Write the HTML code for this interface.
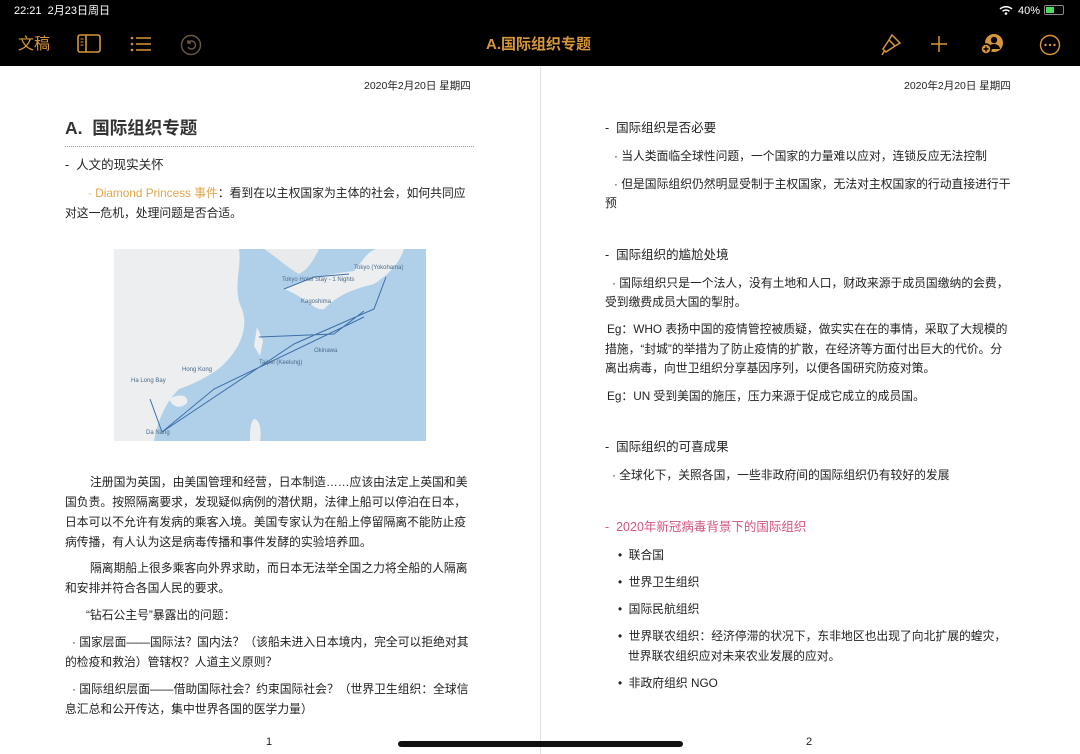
<!DOCTYPE html>
<html><head><meta charset="utf-8"><style>
*{margin:0;padding:0;box-sizing:border-box}
body{width:1080px;height:754px;overflow:hidden;background:#fff;font-family:"Liberation Sans","Noto Sans CJK SC",sans-serif;color:#222;position:relative}
.bar{position:absolute;left:0;top:0;width:1080px;height:66px;background:#000}
.t{position:absolute;white-space:nowrap;font-size:11.8px;line-height:16px}
.o{color:#d8963a}
.w{color:#fff}
.pk{color:#d4557f}
.gold{color:#e0a54a}
</style></head><body>
<div class="bar"></div>
<div class="t w" style="left:14px;top:3px;font-size:11px">22:21&nbsp;&nbsp;2月23日周日</div>
<div class="t w" style="left:1018px;top:3px;font-size:11px">40%</div>
<svg style="position:absolute;left:999px;top:5px" width="14" height="10" viewBox="0 0 14 10"><path d="M1 4a9 9 0 0 1 12 0M3.5 6.3a5.5 5.5 0 0 1 7 0" stroke="#fff" stroke-width="1.5" fill="none"/><circle cx="7" cy="8.5" r="1.3" fill="#fff"/></svg>
<div style="position:absolute;left:1044px;top:5px;width:20px;height:10px;border:1px solid #888;border-radius:2px"><div style="width:8px;height:6px;margin:1px;background:#4cd964"></div></div>
<div class="t o" style="left:18px;top:35px;font-size:16px;line-height:20px">文稿</div>
<svg style="position:absolute;left:77px;top:34px" width="24" height="20"><rect x="1" y="1" width="22" height="17" rx="2" fill="none" stroke="#d8963a" stroke-width="1.6"/><line x1="9" y1="1" x2="9" y2="18" stroke="#d8963a" stroke-width="1.6"/><path d="M3.5 5h3M3.5 8h3M3.5 11h3" stroke="#d8963a"/></svg>
<svg style="position:absolute;left:130px;top:36px" width="22" height="16"><g fill="#d8963a"><circle cx="2" cy="2" r="1.3"/><circle cx="2" cy="8" r="1.3"/><circle cx="2" cy="14" r="1.3"/></g><path d="M6 2h15M6 8h15M6 14h15" stroke="#d8963a" stroke-width="1.5"/></svg>
<svg style="position:absolute;left:180px;top:34px" width="22" height="22"><circle cx="11" cy="11" r="9.5" fill="none" stroke="#6a5a45" stroke-width="1.4"/><path d="M8 9a4 4 0 1 1 0 4M8 6v3h3" fill="none" stroke="#6a5a45" stroke-width="1.4"/></svg>
<div class="t o" style="left:486px;top:35px;font-size:15px;line-height:20px;font-weight:bold">A.国际组织专题</div>
<svg style="position:absolute;left:878px;top:32px" width="26" height="26"><path d="M14 3l8 8-5 3-6-6zM11 8l-6 9 3 3 9-6M7 18l-3 5" fill="none" stroke="#d8963a" stroke-width="1.5"/></svg>
<svg style="position:absolute;left:929px;top:34px" width="20" height="20"><path d="M10 2v16M2 10h16" stroke="#d8963a" stroke-width="1.5"/></svg>
<svg style="position:absolute;left:979px;top:32px" width="28" height="24"><circle cx="15" cy="11" r="9" fill="#d8963a"/><circle cx="15" cy="8" r="3.2" fill="#000"/><path d="M9 17a6 5 0 0 1 12 0" fill="#000"/><circle cx="7" cy="17" r="5" fill="#d8963a" stroke="#000" stroke-width="1.5"/><path d="M7 14.5v5M4.5 17h5" stroke="#000" stroke-width="1.4"/></svg>
<svg style="position:absolute;left:1039px;top:34px" width="22" height="22"><circle cx="11" cy="11" r="9.5" fill="none" stroke="#d8963a" stroke-width="1.4"/><g fill="#d8963a"><circle cx="6.5" cy="11" r="1.2"/><circle cx="11" cy="11" r="1.2"/><circle cx="15.5" cy="11" r="1.2"/></g></svg>

<div style="position:absolute;left:540px;top:66px;width:1px;height:688px;background:#e2e2e2"></div>

<div class="t" style="left:364px;top:78px;font-size:10.5px">2020年2月20日 星期四</div>
<div class="t" style="left:904px;top:78px;font-size:10.5px">2020年2月20日 星期四</div>

<div class="t" style="left:65px;top:117px;font-size:17.5px;line-height:22px;font-weight:bold;color:#333">A.&nbsp; 国际组织专题</div>
<div style="position:absolute;left:65px;top:146px;width:409px;border-top:1px dotted #999"></div>
<div class="t" style="left:65px;top:157px;font-size:12.5px">-&nbsp; 人文的现实关怀</div>
<div class="t" style="left:88px;top:185px"><span class="gold">· Diamond Princess 事件</span>：看到在以主权国家为主体的社会，如何共同应</div>
<div class="t" style="left:65px;top:205px">对这一危机，处理问题是否合适。</div>

<svg style="position:absolute;left:114px;top:249px" width="312" height="192" viewBox="0 0 312 192">
<rect width="312" height="192" fill="#b0d0ea"/>
<path d="M0 0H125C128 20 118 40 128 60 135 80 125 100 110 115 100 125 80 135 65 140 55 150 45 165 40 192H0Z" fill="#eceef0"/>
<path d="M150 0H205C200 10 195 20 185 25 175 20 165 10 150 0Z" fill="#e8eaec"/>
<path d="M170 40C190 30 215 25 240 22 250 10 255 0 265 0H290C285 15 275 25 260 35 240 40 225 45 210 60 200 62 195 50 170 40Z" fill="#eceef0"/>
<path d="M143 78l6 14-3 15-6-10z" fill="#eceef0"/>
<path d="M55 150c10-6 20-4 18 4-6 6-14 5-18-4z" fill="#eceef0"/>
<path d="M140 170c5 0 8 10 6 22h-10c0-10 0-18 4-22z" fill="#eceef0"/>
<path d="M36 150L48 183L180 95L260 60L272 28M48 183L100 140L250 68M170 40L200 28L235 25M145 88L220 85L250 62" fill="none" stroke="#3d6fa8" stroke-width="1"/>
<g font-size="6" fill="#4a6b8c" font-family="Liberation Sans,sans-serif"><text x="240" y="20">Tokyo (Yokohama)</text><text x="168" y="32">Tokyo Hotel Stay - 1 Nights</text><text x="187" y="54">Kagoshima</text><text x="200" y="103">Okinawa</text><text x="145" y="115">Taipei (Keelung)</text><text x="68" y="122">Hong Kong</text><text x="17" y="133">Ha Long Bay</text><text x="32" y="185">Da Nang</text></g>
</svg>

<div class="t" style="left:90px;top:474px">注册国为英国，由美国管理和经营，日本制造……应该由法定上英国和美</div>
<div class="t" style="left:65px;top:494px">国负责。按照隔离要求，发现疑似病例的潜伏期，法律上船可以停泊在日本，</div>
<div class="t" style="left:65px;top:514px">日本可以不允许有发病的乘客入境。美国专家认为在船上停留隔离不能防止疫</div>
<div class="t" style="left:65px;top:534px">病传播，有人认为这是病毒传播和事件发酵的实验培养皿。</div>
<div class="t" style="left:90px;top:560px">隔离期船上很多乘客向外界求助，而日本无法举全国之力将全船的人隔离</div>
<div class="t" style="left:65px;top:580px">和安排并符合各国人民的要求。</div>
<div class="t" style="left:86px;top:607px">“钻石公主号”暴露出的问题：</div>
<div class="t" style="left:72px;top:634px">· 国家层面——国际法？国内法？（该船未进入日本境内，完全可以拒绝对其</div>
<div class="t" style="left:65px;top:654px">的检疫和救治）管辖权？人道主义原则？</div>
<div class="t" style="left:72px;top:681px">· 国际组织层面——借助国际社会？约束国际社会？（世界卫生组织：全球信</div>
<div class="t" style="left:65px;top:701px">息汇总和公开传达，集中世界各国的医学力量）</div>
<div class="t" style="left:266px;top:734px;font-size:11px">1</div>
<div class="t" style="left:806px;top:734px;font-size:11px">2</div>
<div style="position:absolute;left:398px;top:741px;width:285px;height:6px;border-radius:3px;background:#111"></div>

<div class="t" style="left:605px;top:120px;font-size:12.5px">-&nbsp; 国际组织是否必要</div>
<div class="t" style="left:614px;top:148px">· 当人类面临全球性问题，一个国家的力量难以应对，连锁反应无法控制</div>
<div class="t" style="left:614px;top:176px">· 但是国际组织仍然明显受制于主权国家，无法对主权国家的行动直接进行干</div>
<div class="t" style="left:605px;top:195px">预</div>
<div class="t" style="left:605px;top:247px;font-size:12.5px">-&nbsp; 国际组织的尴尬处境</div>
<div class="t" style="left:612px;top:275px">· 国际组织只是一个法人，没有土地和人口，财政来源于成员国缴纳的会费，</div>
<div class="t" style="left:605px;top:294px">受到缴费成员大国的掣肘。</div>
<div class="t" style="left:607px;top:321px">Eg：WHO 表扬中国的疫情管控被质疑，做实实在在的事情，采取了大规模的</div>
<div class="t" style="left:605px;top:341px">措施，“封城”的举措为了防止疫情的扩散，在经济等方面付出巨大的代价。分</div>
<div class="t" style="left:605px;top:360px">离出病毒，向世卫组织分享基因序列，以便各国研究防疫对策。</div>
<div class="t" style="left:607px;top:388px">Eg：UN 受到美国的施压，压力来源于促成它成立的成员国。</div>
<div class="t" style="left:605px;top:439px;font-size:12.5px">-&nbsp; 国际组织的可喜成果</div>
<div class="t" style="left:612px;top:467px">· 全球化下，关照各国，一些非政府间的国际组织仍有较好的发展</div>
<div class="t pk" style="left:605px;top:519px;font-size:12.5px">-&nbsp; 2020年新冠病毒背景下的国际组织</div>
<div class="t" style="left:618px;top:547px">•&nbsp; 联合国</div>
<div class="t" style="left:618px;top:574px">•&nbsp; 世界卫生组织</div>
<div class="t" style="left:618px;top:601px">•&nbsp; 国际民航组织</div>
<div class="t" style="left:618px;top:628px">•&nbsp; 世界联农组织：经济停滞的状况下，东非地区也出现了向北扩展的蝗灾，</div>
<div class="t" style="left:628px;top:648px">世界联农组织应对未来农业发展的应对。</div>
<div class="t" style="left:618px;top:675px">•&nbsp; 非政府组织 NGO</div>
</body></html>
